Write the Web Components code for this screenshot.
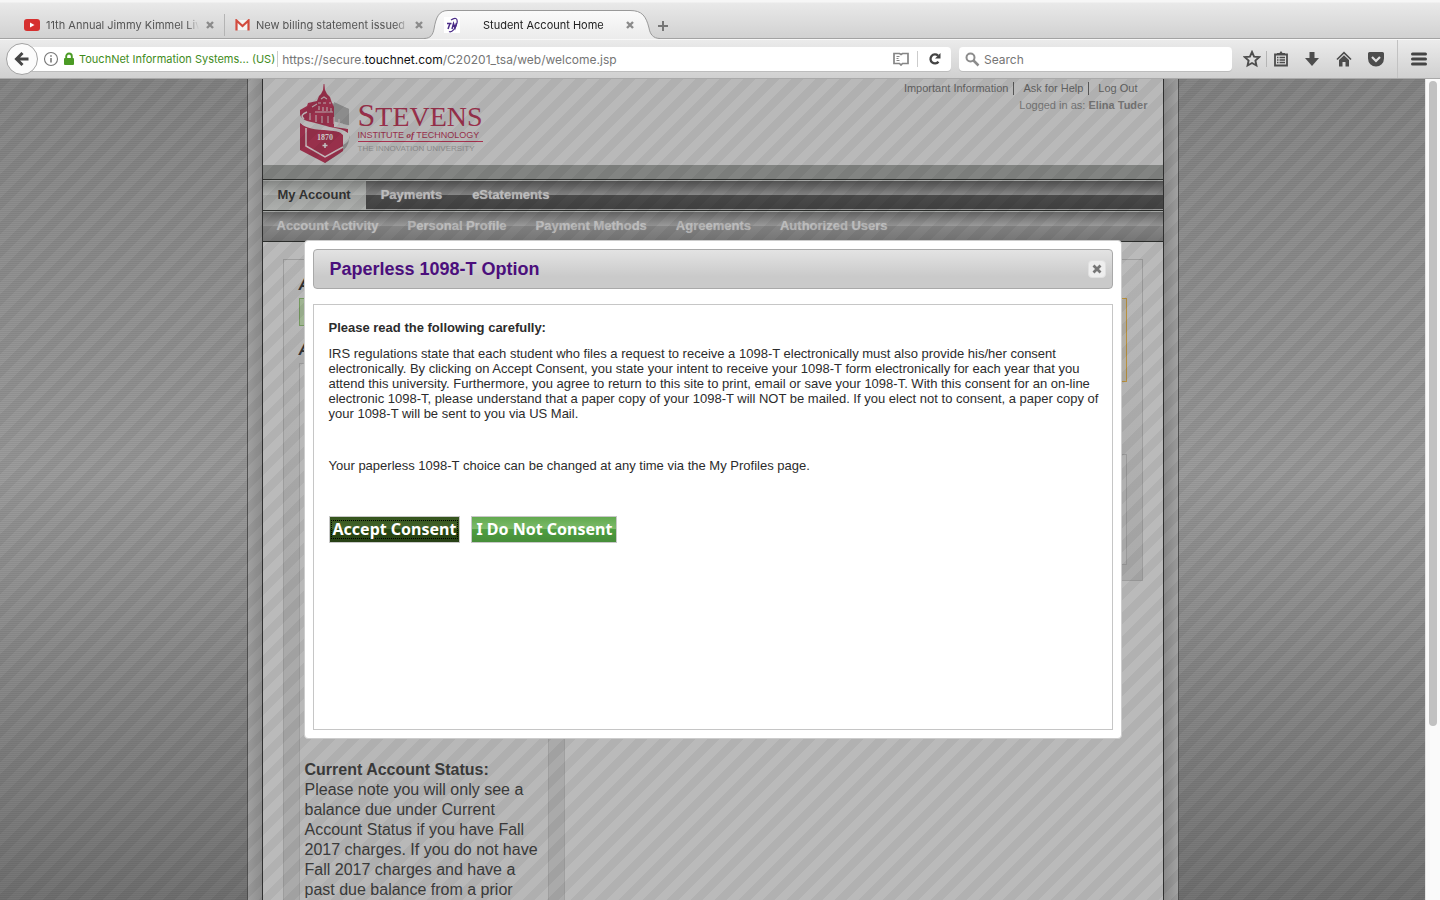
<!DOCTYPE html>
<html lang="en">
<head>
<meta charset="utf-8">
<title>Student Account Home</title>
<style>
  html, body { margin: 0; height: 100%; overflow: hidden; }
  body { font-family: "Liberation Sans", Arial, sans-serif; color: #333; }
</style>
</head>
<body>
<app-window></app-window>

<script>
const define = (name, html) => customElements.define(name, class extends HTMLElement {
  constructor() {
    super();
    const t = document.createElement('template');
    t.innerHTML = html;
    this.attachShadow({ mode: 'open' }).append(t.content.cloneNode(true));
  }
});

/* ---------- browser tabs ---------- */
define('browser-tab', `
<style>
  :host { display: flex; align-items: center; box-sizing: border-box; width: 196px; height: 28px; padding: 0 5px 0 0; color: #555; font-size: 11px; }
  .label { flex: 1; margin-left: 6px; overflow: hidden; white-space: nowrap; -webkit-mask-image: linear-gradient(90deg, #000 92%, transparent); mask-image: linear-gradient(90deg, #000 92%, transparent); }
  button { display: flex; border: 0; padding: 0; margin-left: 6px; background: none; color: #8b8b8b; }
  ::slotted(svg) { display: block; flex: none; }
</style>
<slot name="icon"></slot><span class="label"><slot></slot></span>
<button aria-label="Close tab"><svg width="10" height="10" viewBox="0 0 10 10"><path d="M2 2l6 6M8 2l-6 6" stroke="currentColor" stroke-width="2.4"/></svg></button>`);

define('tab-strip', `
<style>
  :host { display: flex; box-sizing: border-box; height: 39px; padding: 11px 0 0 24px; border-bottom: 1px solid #a3a3a3; background: linear-gradient(#f6f6f6 0 2px, #e9e9e9 3px, #d1d1d1); font-family: Inter, Roboto, sans-serif; }
  browser-tab:nth-of-type(2) { width: 200px; padding-left: 10px; padding-right: 0; border-left: 1px solid #b4b4b4; height: 22px; margin: 3px 0 0 4px; box-sizing: border-box; }
  .active { position: relative; width: 236px; height: 29px; margin-top: -1px; }
  .active > svg { position: absolute; left: 0; top: 0; }
  .active browser-tab { position: relative; width: 100%; height: 30px; padding: 0 25px 0 20px; color: #222; }
  .plus { border: 0; padding: 0; margin: 9px 0 0 -3px; width: 12px; height: 12px; background: none; }
  .plus svg { display: block; }
  .t { padding-left: 17px; }
</style>
<browser-tab><svg slot="icon" width="16" height="16" viewBox="0 0 16 16"><rect y="2" width="16" height="12" rx="3" fill="#d6302f"/><path d="M6 5.500v5l4.500-2.500z" fill="#fff"/></svg>11th Annual Jimmy Kimmel Live</browser-tab>
<browser-tab><svg slot="icon" width="15" height="12" viewBox="0 0 15 12"><path d="M1 1h13v10H1z" fill="#f3f3f3"/><path d="M1.500 11.500V1.500l6 5.500 6-5.500v10" fill="none" stroke="#d24b3e" stroke-width="2.200"/></svg>New billing statement issued</browser-tab>
<div class="active">
  <svg width="236" height="29" viewBox="0 0 236 29"><defs><linearGradient id="g" x2="0" y2="1"><stop stop-color="#fbfbfb"/><stop offset="1" stop-color="#ebebeb"/></linearGradient></defs>
  <path d="M0 29V28.500C7 28.500 9 24 10 19C12 7 15 .5 24 .5H206C218 .5 222 6 225 18C226 24 229 28.500 236 28.500V29Z" fill="url(#g)"/><path d="M0 28.500C7 28.500 9 24 10 19C12 7 15 .5 24 .5H206C218 .5 222 6 225 18C226 24 229 28.500 236 28.500" fill="none" stroke="#999"/></svg>
  <browser-tab><svg slot="icon" width="16" height="16" viewBox="0 0 16 16"><path d="M0 0h16v16H0z" fill="#fff"/><g fill="none" stroke="#4a2b87" stroke-width="1.500"><path d="M3 6.500h4.500M6 6.500L4 12M8 12l1.500-5.500L11 11l1.500-5"/><path d="M7 3C11 0 14 1 13 6C12 11 8 16 5 14.500" stroke-width="1.200"/></g></svg><span class="t">Student Account Home</span></browser-tab>
</div>
<button class="plus" aria-label="New tab"><svg width="12" height="12" viewBox="0 0 12 12"><path d="M6 1v10M1 6h10" stroke="#777" stroke-width="2"/></svg></button>`);

/* ---------- navigation toolbar ---------- */
define('nav-toolbar', `
<style>
  :host { display: flex; align-items: center; box-sizing: border-box; height: 40px; padding: 0 13px 0 6px; border-top: 1px solid #f8f8f8; border-bottom: 1px solid #a9a9a9; background: linear-gradient(#ebebeb, #d0d0d0); font-family: Inter, Roboto, sans-serif; font-size: 12px; color: #757575; }
  button { display: flex; align-items: center; justify-content: center; border: 0; padding: 0; background: none; flex: none; }
  .back { position: relative; z-index: 1; width: 32px; height: 32px; border: 1px solid #a2a2a2; border-radius: 50%; background: #fbfbfb; }
  .url { flex: 1; display: flex; align-items: center; height: 24px; margin-left: -12px; padding-left: 17px; border-radius: 0 4px 4px 0; background: #fff; box-shadow: 0 1px #bdbdbd; white-space: nowrap; }
  .url > svg { flex: none; }
  .lock { margin-left: 4px; }
  .id { margin: 0 4px; padding-right: 2px; border-right: 1px solid #ccc; font-size: 11px; line-height: 16px; color: #3f8c1c; }
  .addr { flex: 1; }
  b { font-weight: 400; color: #111; }
  .reader { margin-right: 8px; }
  .reload { width: 34px; height: 16px; border-left: 1px solid #ccc; }
  label { display: flex; align-items: center; box-sizing: border-box; width: 273px; height: 24px; margin: 0 10px 0 8px; padding-left: 6px; gap: 4px; border-radius: 4px; background: #fff; box-shadow: 0 1px #bdbdbd; }
  input { flex: 1; min-width: 0; border: 0; padding: 0; outline: 0; background: none; font: inherit; color: #757575; }
  input::placeholder { color: #757575; }
  .list { width: 28px; height: 16px; margin-right: 2px; border-left: 1px solid #b5b5b5; }
  .star { width: 20px; margin-right: 4px; }
  .tool { width: 32px; }
  .menu { width: 32px; height: 38px; padding-left: 10px; border-left: 1px solid #c2c2c2; margin-left: 5px; margin-right: -2px; }
</style>
<button class="back" aria-label="Back"><svg width="16" height="16" viewBox="0 0 16 16"><path d="M8.500 2L2.500 8l6 6M3 8h11.500" fill="none" stroke="#444" stroke-width="3"/></svg></button>
<div class="url">
  <svg width="16" height="16" viewBox="0 0 16 16"><circle cx="8" cy="8" r="6.500" fill="none" stroke="#777" stroke-width="1.100"/><path d="M8 7v4.500M8 4.200v1.500" stroke="#666" stroke-width="1.400"/></svg>
  <svg class="lock" width="12" height="14" viewBox="0 0 12 14"><rect x="1" y="6" width="10" height="7" rx="1" fill="#4b9b25"/><path d="M3.200 7V4.300a2.800 2.800 0 0 1 5.600 0V7" fill="none" stroke="#4b9b25" stroke-width="1.900"/></svg>
  <span class="id">TouchNet Information Systems... (US)</span>
  <span class="addr" role="textbox" aria-label="Address">https://secure.<b>touchnet.com</b>/C20201_tsa/web/welcome.jsp</span>
  <button class="reader" aria-label="Reader view"><svg width="16" height="14" viewBox="0 0 16 14"><path d="M1 1.500h5.500L8 2.500l1.500-1H15v10H9.500L8 13l-1.500-1.500H1z" fill="none" stroke="#858585" stroke-width="1.700"/><path d="M3.500 4.500h3M3.500 6.500h2M3.500 8.500h3" stroke="#858585"/></svg></button>
  <button class="reload" aria-label="Reload"><svg width="14" height="14" viewBox="0 0 14 14"><path d="M10.500 9.800A4.500 4.500 0 1 1 10 3.600" fill="none" stroke="#444" stroke-width="2.300"/><path d="M12.500 1v5.500H7z" fill="#444"/></svg></button>
</div>
<label><svg width="15" height="15" viewBox="0 0 15 15"><circle cx="5.500" cy="5.500" r="4" fill="none" stroke="#8c8c8c" stroke-width="2"/><path d="M8.500 8.500l5 5" stroke="#8c8c8c" stroke-width="2.500"/></svg><input type="search" aria-label="Search" placeholder="Search"></label>
<button class="star" aria-label="Bookmark"><svg width="18" height="18" viewBox="0 0 18 18"><path d="M9 2l2.100 4.600 5 .5-3.700 3.400 1 5L9 13l-4.400 2.500 1-5L1.900 7.100l5-.5z" fill="none" stroke="#4d4d4d" stroke-width="1.900"/></svg></button>
<button class="list" aria-label="Bookmarks list"><svg width="16" height="18" viewBox="0 0 16 18"><path d="M2 4.500h12v11H2z" fill="none" stroke="#4d4d4d" stroke-width="1.800"/><path d="M4 4.500V3h2.500L8 1l1.500 2H12v1.500z" fill="#4d4d4d"/><path d="M4 7.500h1.500m1 0H12M4 10h1.500m1 0H12M4 12.500h1.500m1 0H12" stroke="#4d4d4d" stroke-width="1.300"/></svg></button>
<button class="tool" aria-label="Downloads"><svg width="16" height="16" viewBox="0 0 16 16"><path d="M5.500 1h5v6H15l-7 8-7-8h4.500z" fill="#4d4d4d"/></svg></button>
<button class="tool" aria-label="Home"><svg width="16" height="16" viewBox="0 0 16 16"><path d="M1 8.500L8 1.700l7 6.800" fill="none" stroke="#4d4d4d" stroke-width="1.700"/><path d="M3 9l5-4.800L13 9v6.500H9.500V11h-3v4.500H3z" fill="#4d4d4d"/></svg></button>
<button class="tool" aria-label="Pocket"><svg width="16" height="15" viewBox="0 0 16 15"><path d="M1.500 0h13A1.500 1.500 0 0 1 16 1.500V6.500a8 8 0 0 1-16 0V1.500A1.500 1.500 0 0 1 1.500 0z" fill="#4d4d4d"/><path d="M4 5l4 4 4-4" fill="none" stroke="#e0e0e0" stroke-width="2.200"/></svg></button>
<button class="menu" aria-label="Menu"><svg width="16" height="14" viewBox="0 0 16 14"><path d="M1.500 2h13M1.500 7h13M1.500 12h13" stroke="#444" stroke-width="3" stroke-linecap="round"/></svg></button>`);

/* ---------- school logo ---------- */
define('brand-logo', `
<style>
  :host { display: flex; width: max-content; gap: 8px; color: #98304b; }
  .words { padding-top: 17px; white-space: nowrap; }
  .name { font: 28px/29px "Liberation Serif", serif; height: 29px; }
  .name span { font-size: 32px; line-height: 29px; }
  .sub { font-size: 9px; line-height: 11px; border-bottom: 1px solid #a8304e; }
  .sub i { font: italic bold 9px/9px "Liberation Serif", serif; }
  .tag { font-size: 8px; line-height: 12px; margin-top: 1px; color: #8c8c8c; }
</style>
<svg width="50" height="80" viewBox="0 0 50 80">
  <path d="M32 19l17 6v16L32 37zM49 51q2 6-6 10L25 73v6l14-9q10-7 10-15z" fill="#8c8c8c"/>
  <path d="M0 26l7-4 1-3 9-2 2-5 2-2 2-4 .6-6h.8l.6 6 2 4 3 3 2 6 2 4v20l14 2v4Q25 41 7 37Q0 34 0 30z" fill="#98304b"/>
  <path d="M0 39q6 5 24 6 15 1 19 6v16L25 79 0 66z" fill="#98304b"/>
  <path d="M4 35Q-1 31 7 28M6 44v18l19 11 18-10" fill="none" stroke="#c4b8bb" stroke-width="1.500"/>
  <path d="M10 36v-7M16 38v-7M22 39v-7M28 39v-7M34 40v-7M39 42v-7M21 15l3-2 3 2M18 19h3m2 0h3m3 0h2M12 23l5-3M19 26v-4M23 27v-4M27 27v-4M31 28v-4M15 28h18" stroke="#b9a9ad" stroke-width="1.100" fill="none"/>
  <path d="M34 18l15 7v16l-6-1V30l-9-4z" fill="#8c8c8c"/>
  <path d="M0 34q6 8 26 9 18 1 23 7-10-3-25-4Q4 45 0 38z" fill="#bcb9ba"/>
  <text x="25" y="56" text-anchor="middle" font-family="Liberation Serif" font-weight="700" font-size="8" fill="#ccc">1870</text>
  <path d="M25 59v5M22.500 61.500h5" stroke="#ccc" stroke-width="1.500"/>
</svg>
<div class="words">
  <div class="name"><span>S</span>TEVENS</div>
  <div class="sub">INSTITUTE <i>of</i> TECHNOLOGY</div>
  <div class="tag">THE INNOVATION UNIVERSITY</div>
</div>`);

/* ---------- site header and menus ---------- */
define('site-header', `
<style>
  :host { display: flex; justify-content: space-between; box-sizing: border-box; height: 101px; border-bottom: 1px solid #2e302e; background: linear-gradient(#b9b9b9 0 86px, #828482 86px); }
  brand-logo { margin: 5px 0 0 37px; }
  .meta { padding: 1px 15px 0 0; text-align: right; font-size: 11px; line-height: 17px; color: #747474; }
  nav { display: flex; justify-content: flex-end; align-items: center; height: 17px; padding-right: 2px; }
  a { padding: 0 5px 0 9px; line-height: 13px; color: #616161; text-decoration: none; border-left: 1px solid #555; }
  a:first-child { border: 0; }
  a:last-child { padding-right: 8px; }
</style>
<brand-logo></brand-logo>
<div class="meta">
  <nav><a href="#">Important Information</a><a href="#">Ask for Help</a><a href="#">Log Out</a></nav>
  <div>Logged in as: <b>Elina Tuder</b></div>
</div>`);

define('menu-bar', `
<style>
  :host { display: flex; box-sizing: border-box; height: 31px; border-top: 1px solid #a3a5a3; border-bottom: 1px solid #2b2d2b; background: linear-gradient(#525252, #878787 14px, #4b4b4b 14px, #424242 28px, #999 28px); }
  :host([sub]) { background: linear-gradient(#686868, #9a9a9a 14px, #868686 14px, #757575); }
  ::slotted(a) { padding: 0 15px; font-size: 13px; line-height: 27px; font-weight: 700; color: #bcbcbc; text-decoration: none; text-shadow: 0 0 1px #aaa; }
  :host([sub]) ::slotted(a) { padding: 0 15px 0 14px; line-height: 28px; }
  ::slotted(a[aria-current]) { height: 29px; color: #333; text-shadow: none; background: linear-gradient(#858785, #b0b2b0 14px, #9fa19f 14px, #adafad); }
</style>
<slot></slot>`);

/* ---------- account page behind the dialog ---------- */
define('account-home', `
<style>
  :host { display: grid; grid-template-columns: 282px 1fr; align-items: start; flex: 1; padding: 17px 20px 0; background: #bababa; }
  .side, .main { box-sizing: border-box; border: 1px solid #9d9d9d; background: linear-gradient(#bababa, #aaa 321px); }
  .side { height: 900px; padding: 16px 15px 0; border-right-color: #a0a0a0; }
  .main { height: 322px; border-left: 0; padding: 38px 15px 0; margin-left: -1px; }
  h2 { margin: 0; font-size: 16px; line-height: 18px; font-weight: 700; font-style: italic; }
  .note { height: 26px; margin: 4px 0 15px; border: 1px solid #74985f; background: #9fb492; }
  .box { height: 500px; margin-top: 4px; padding: 396px 5px 0; border: 1px solid #9f9f9f; background: #b8b8b8; font-size: 16px; line-height: 20px; white-space: nowrap; color: #3b3b3b; }
  .alert { height: 82px; border: 1px solid #b8903c; background: #b3b0a8; }
  .card { height: 109px; margin-top: 72px; border: 1px solid #999; background: #b0b0b0; }
</style>
<div class="side"><h2>A</h2><div class="note"></div><h2>A</h2>
  <div class="box"><b>Current Account Status:</b><br>Please note you will only see a<br>balance due under Current<br>Account Status if you have Fall<br>2017 charges. If you do not have<br>Fall 2017 charges and have a<br>past due balance from a prior</div></div>
<div class="main"><div class="alert"></div><div class="card"></div></div>`);

/* ---------- modal dialog ---------- */
define('modal-dialog', `
<style>
  :host { display: block; box-sizing: border-box; padding: 8px; border: 1px solid #ccc; border-radius: 4px; background: #fff; }
  header { display: flex; align-items: center; justify-content: space-between; box-sizing: border-box; height: 40px; padding: 0 6px 0 16px; border: 1px solid #a9a9a9; border-radius: 4px; background: linear-gradient(#e3e3e3, #cacaca 70%); }
  h1 { margin: 0; font-size: 18px; line-height: 22px; color: #4b0f7c; }
  .x { display: flex; align-items: center; justify-content: center; width: 18px; height: 18px; padding: 0; border: 1px solid #e0e0e0; border-radius: 4px; background: #eee; }
  .content { box-sizing: border-box; height: 426px; margin-top: 15px; padding: 15px; border: 1px solid #c6c6c6; font-size: 13px; line-height: 15px; color: #2c2c2c; }
</style>
<header><h1><slot name="title"></slot></h1><button class="x" aria-label="Close"><svg width="10" height="10" viewBox="0 0 10 10"><path d="M1.500 1.500l7 7M8.500 1.500l-7 7" stroke="#777" stroke-width="2.800"/></svg></button></header>
<div class="content"><slot></slot></div>`);

define('consent-button', `
<style>
  :host { display: inline-block; }
  button { display: block; box-sizing: border-box; height: 27px; padding: 3px 1px; border: 1px solid #c8c8c8; background: linear-gradient(#62a94f, #7dbb6b 12px, #4f9f40 12px, #468d3a); font: 700 16px/17px "Noto Sans", Verdana, sans-serif; color: #fff; }
  span { display: block; padding: 0 2px; border: 1px solid transparent; }
  :host([primary]) button { background: linear-gradient(#34541c, #44642c 12px, #29480f 12px, #274016); }
  :host([primary]) span { padding: 0 1px; border: 1px dotted #000; }
</style>
<button><span><slot></slot></span></button>`);

define('paperless-form', `
<style>
  :host { display: block; }
  modal-dialog { width: 100%; }
  p { margin: 0; white-space: nowrap; }
  .intro { margin-bottom: 11px; font-weight: 700; }
  .later { margin: 37px 0 43px; }
  .actions { display: flex; gap: 11px; }
</style>
<modal-dialog role="dialog" aria-label="Paperless 1098-T Option"><span slot="title">Paperless 1098-T Option</span>
  <p class="intro">Please read the following carefully:</p>
  <p>IRS regulations state that each student who files a request to receive a 1098-T electronically must also provide his/her consent<br>electronically. By clicking on Accept Consent, you state your intent to receive your 1098-T form electronically for each year that you<br>attend this university. Furthermore, you agree to return to this site to print, email or save your 1098-T. With this consent for an on-line<br>electronic 1098-T, please understand that a paper copy of your 1098-T will NOT be mailed. If you elect not to consent, a paper copy of<br>your 1098-T will be sent to you via US Mail.</p>
  <p class="later">Your paperless 1098-T choice can be changed at any time via the My Profiles page.</p>
  <div class="actions"><consent-button primary>Accept Consent</consent-button><consent-button>I Do Not Consent</consent-button></div>
</modal-dialog>`);

/* ---------- page area ---------- */
define('scroll-track', `
<style>
  :host { display: block; box-sizing: border-box; width: 15px; padding: 2px 3px; border-left: 1px solid #e6e6e6; background: #fafafa; }
  div { width: 8px; height: 79%; border-radius: 4px; background: #c1c1c1; }
</style><div></div>`);

define('web-page', `
<style>
  :host { position: relative; display: flex; justify-content: center; overflow: hidden;
    background: repeating-linear-gradient(rgba(0,0,0,.05) 0 1px, transparent 1px 2px), linear-gradient(#868686, #9c9c9c 48%, #747474); }
  .gutter { box-sizing: border-box; width: 932px; padding: 0 14px; border: solid #505050; border-width: 0 1px; background: linear-gradient(90deg, #a0a0a0, #8c8c8c 15px, #8c8c8c 917px, #a2a2a2); }
  .page { display: flex; flex-direction: column; min-height: 100%; border: solid #303030; border-width: 0 1px; }
  .veil { position: absolute; inset: 0; background: linear-gradient(135deg, rgba(0,0,0,.05) 25%, transparent 25% 50%, rgba(0,0,0,.05) 50% 75%, transparent 75%) 0 0 / 24px 24px; }
  paperless-form { position: absolute; top: 161px; left: 50%; width: 818px; margin-left: -409px; }
</style>
<div class="gutter"><div class="page">
  <site-header></site-header>
  <menu-bar><a href="#" aria-current="page">My Account</a><a href="#">Payments</a><a href="#">eStatements</a></menu-bar>
  <menu-bar sub><a href="#">Account Activity</a><a href="#">Personal Profile</a><a href="#">Payment Methods</a><a href="#">Agreements</a><a href="#">Authorized Users</a></menu-bar>
  <account-home></account-home>
</div></div>
<div class="veil"></div>
<paperless-form></paperless-form>`);

define('app-window', `
<style>
  :host { display: flex; flex-direction: column; height: 100vh; }
  .view { flex: 1; min-height: 0; display: flex; }
  web-page { flex: 1; }
</style>
<tab-strip></tab-strip><nav-toolbar></nav-toolbar>
<div class="view"><web-page></web-page><scroll-track></scroll-track></div>`);
</script>
</body>
</html>
